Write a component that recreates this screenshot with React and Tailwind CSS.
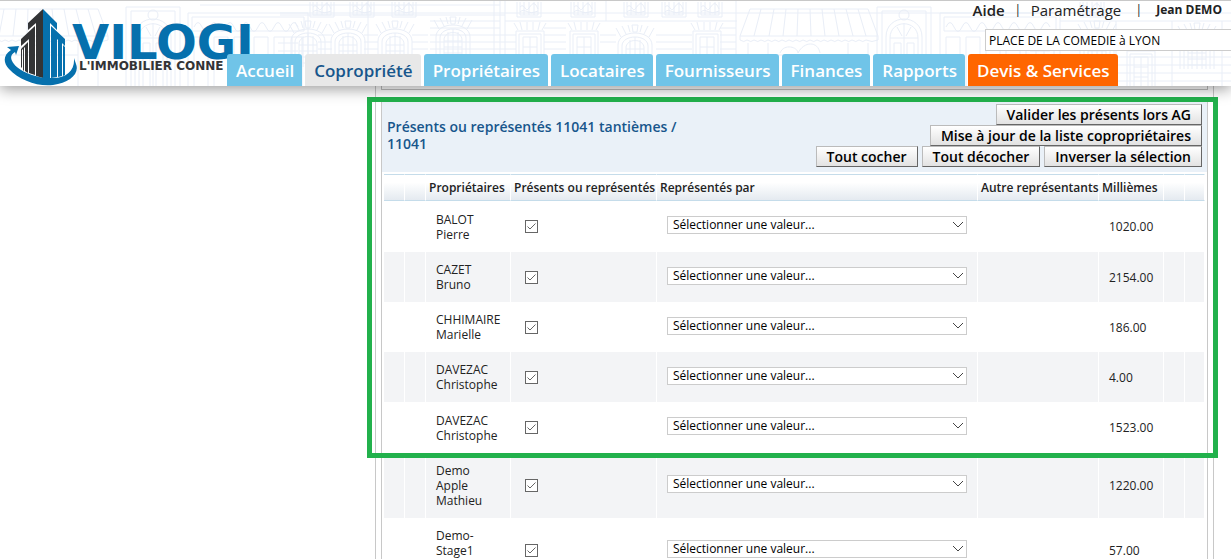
import React, { useState } from "react";

const tabs = [
  { label: "Accueil", color: "bg-[#70c4e8] text-white" },
  { label: "Copropriété", color: "bg-[#e8e8e8] text-[#17568c]" },
  { label: "Propriétaires", color: "bg-[#70c4e8] text-white" },
  { label: "Locataires", color: "bg-[#70c4e8] text-white" },
  { label: "Fournisseurs", color: "bg-[#70c4e8] text-white" },
  { label: "Finances", color: "bg-[#70c4e8] text-white" },
  { label: "Rapports", color: "bg-[#70c4e8] text-white" },
  { label: "Devis & Services", color: "bg-[#ff6600] text-white" },
];

const initialOwners = [
  { id: 1, name: ["BALOT", "Pierre"], shares: "1020.00", present: true },
  { id: 2, name: ["CAZET", "Bruno"], shares: "2154.00", present: true },
  { id: 3, name: ["CHHIMAIRE", "Marielle"], shares: "186.00", present: true },
  { id: 4, name: ["DAVEZAC", "Christophe"], shares: "4.00", present: true },
  { id: 5, name: ["DAVEZAC", "Christophe"], shares: "1523.00", present: true },
  { id: 6, name: ["Demo", "Apple", "Mathieu"], shares: "1220.00", present: true },
  { id: 7, name: ["Demo-", "Stage1", "Demo"], shares: "57.00", present: true },
];

const ArchWindow = ({ x, y }) => (
  <g transform={`translate(${x} ${y})`}>
    <path d="M-4 40V14C-4 -2 30 -2 30 14V40M0 40V15C0 3 26 3 26 15V40M4 40V17C4 7 22 7 22 17V40" />
    <path d="M8 9V40M13 6V40M18 9V40M4 18H22M4 24H22M4 30H22M4 36H22" />
    <path d="M-6 -3L-1 6M0 -5L4 3M6 -6L8 1M20 -6L18 1M26 -5L22 3M32 -3L27 6M10 -6H16L15 1H11Z" />
  </g>
);

const SquareWindow = ({ x, y }) => (
  <g transform={`translate(${x} ${y})`}>
    <path d="M-3 0H25V40M-3 0V40M0 3H22V40M0 3V40M4 6H18V40M4 6V40M11 6V40M4 16H18M4 26H18" />
    <path d="M-5 -8L-1 -1M1 -9L3 -1M8 -9V-1M14 -9V-1M21 -9L19 -1M27 -8L23 -1" />
  </g>
);

const Balcony = ({ x }) => (
  <g transform={`translate(${x} 1)`}>
    <path d="M0 0V15H24V0M3 0V13H21V0M7 0V13M12 0V13M17 0V13M3 5C8 0 8 12 12 6S18 0 21 7M3 10C8 5 10 14 21 9" />
  </g>
);

const Awning = ({ x }) => (
  <g transform={`translate(${x} 8)`}>
    <path d="M10 0H128L138 27H0ZM0 27V31Q4 34 7 31Q11 34 14 31Q18 34 21 31Q25 34 28 31Q32 34 35 31Q39 34 42 31Q46 34 49 31Q53 34 56 31Q60 34 63 31Q67 34 70 31Q74 34 77 31Q81 34 84 31Q88 34 91 31Q95 34 98 31Q102 34 105 31Q109 34 112 31Q116 34 119 31Q123 34 126 31Q132 34 138 31V27" />
    <path d="M21 0L14 27M34 0L29 27M46 0L43 27M58 0L57 27M70 0L71 27M82 0L85 27M94 0L99 27M106 0L113 27M118 0L126 27" />
    <path d="M8 34V78M28 34V78M108 34V78M128 34V78M28 46H108M40 44C44 34 58 38 58 44C64 32 78 32 80 44" />
  </g>
);

const Doorway = ({ x }) => (
  <g transform={`translate(${x} 6)`}>
    <path d="M0 80V0H54V80M5 80V4H49V80M9 80V30C9 6 45 6 45 30V80M13 80V31C13 12 41 12 41 31V80M27 16V80M13 31H41M17 80V36H24V80M30 80V36H37V80M20 20L25 29M34 20L29 29" />
    <circle cx="27" cy="8" r="5" />
  </g>
);

const Shopfront = ({ x }) => (
  <g transform={`translate(${x} 12)`}>
    <path d="M0 0H120V74H0ZM4 4H116V18H4ZM6 14Q10 5 14 14T22 14T30 14T38 14T46 14T54 14T62 14T70 14T78 14T86 14T94 14T102 14T110 14M6 74V24H20V74M26 74V24H40V74M46 74V24H60V74M66 74V24H80V74M86 74V24H114V74M90 30H110M90 38H110M90 46H110M96 24V60M104 24V60" />
  </g>
);

// pale street front drawn behind the header
const Facade = () => (
  <svg
    className="absolute inset-0 h-full w-full"
    fill="none"
    stroke="#e9eef7"
    strokeWidth="1"
    aria-hidden="true"
  >
    <Awning x={-30} />
    <Doorway x={126} />
    <Shopfront x={188} />
    <path d="M280 12H1231M280 14H505M505 20H737M200 4H500M430 20H500M430 27H500M430 34H500M430 41H500M430 48H500M318 34H332M318 41H332M318 48H332M364 34H378M364 41H378M364 48H378M412 34H428M412 41H428M412 48H428M494 0V86M500 0V86M505 0V86M368 0V86M606 0V20M736 0V86" />
    <path d="M500 34H516M500 41H516M500 48H516M544 27H566M544 34H566M544 41H566M544 48H566M600 34H616M600 41H616M656 34H692M656 41H692M656 48H692M720 27H736M720 34H736M720 41H736M720 48H736" />
    <ArchWindow x={295} y={26} />
    <ArchWindow x={335} y={26} />
    <ArchWindow x={382} y={26} />
    <ArchWindow x={440} y={22} />
    <ArchWindow x={622} y={30} />
    <Balcony x={350} />
    <Balcony x={310} />
    <Balcony x={392} />
    <Balcony x={517} />
    <Balcony x={571} />
    <Balcony x={624} />
    <Balcony x={662} />
    <Balcony x={698} />
    <SquareWindow x={519} y={30} />
    <SquareWindow x={573} y={30} />
    <SquareWindow x={696} y={30} />
    <Awning x={740} />
    <Doorway x={877} />
    <Shopfront x={940} />
    <Balcony x={1080} />
    <ArchWindow x={1084} y={26} />
    <SquareWindow x={1130} y={50} />
    <ArchWindow x={1184} y={28} />
    <path d="M1060 20H1231M1060 56H1231M1060 64H1231M1060 72H1231M1060 80H1231M1116 20V86M1172 20V86M1222 20V86" />
  </svg>
);

const Logo = () => (
  <a href="#" className="relative block h-full w-[227px] shrink-0" aria-label="Vilogi">
    <svg viewBox="0 0 270 85" className="h-[85px] w-[270px] max-w-none">
      <g fill="#333436">
        <path d="M43 8L28 22V29L36 22V75L43 77Z" />
        <path d="M35 25L21 38V45L29 38V72L35 74Z" />
        <path d="M28 41L21 48V66L22 67V49L23 48V69L24 70V47L25 46V70L28 72Z" />
      </g>
      <g fill="#0670ad">
        <path d="M43 8L57 22V29L50 22V77H43Z" />
        <path d="M51 25L65 38V45L62 42V75L58 76V39L57 38V76L51 77Z" />
        <path d="M63 44L65 46V74L63 75Z" />
        <path d="M19 45L7 46L11 49C3 54 3 62 9 68C19 79 38 86 53 84C69 82 80 73 76 63L74 57C75 69 67 77 53 77C38 78 20 71 14 63C10 58 10 54 15 51L16 54Z" />
      </g>
      <text x="72" y="58" fill="#0670ad" className="font-['DejaVu_Sans'] text-[48px] font-bold">
        VILOGI
      </text>
      <text x="79" y="69" fill="#333436" className="font-['DejaVu_Sans'] text-[12px] font-bold">
        L'IMMOBILIER CONNE
      </text>
    </svg>
  </a>
);

const Header = () => (
  <header className="relative z-10 flex h-[86px] shrink-0 border-t border-[#c8c8c8] bg-white shadow-[0_3px_14px_rgba(0,0,0,0.4)]">
    <Facade />
    <Logo />
    <div className="relative flex min-w-0 flex-1 flex-col">
      <div className="flex h-[18px] items-center justify-end pr-[9px] text-[15px] text-[#222]">
        <a href="#" className="font-semibold">Aide</a>
        <span className="w-[26px] text-center text-[12px]">|</span>
        <a href="#">Paramétrage</a>
        <span className="w-[35px] text-center text-[12px]">|</span>
        <a href="#" className="text-[12px] font-bold">Jean DEMO</a>
      </div>
      <input
        type="text"
        aria-label="Copropriété"
        defaultValue="PLACE DE LA COMEDIE à LYON"
        className="mt-[10px] h-[22px] w-[246px] self-end border border-r-0 border-[#ccc] bg-white px-[3px] text-[12px] text-black"
      />
      <nav className="mt-auto flex gap-[3px]">
        {tabs.map((tab) => (
          <a
            key={tab.label}
            href="#"
            className={`h-8 rounded-t-[3px] pr-2 pl-[9px] text-[17px] leading-[34px] font-semibold whitespace-nowrap ${tab.color}`}
          >
            {tab.label}
          </a>
        ))}
      </nav>
    </div>
  </header>
);

const ActionButton = ({ children, onClick }) => (
  <button
    type="button"
    onClick={onClick}
    className="h-[21px] border border-t-[#bbb] border-r-[#666] border-b-[#666] border-l-[#bbb] bg-linear-to-b from-white to-[#e2e2e2] px-[10px] text-[14px] leading-[18px] font-semibold whitespace-nowrap text-black"
  >
    {children}
  </button>
);

const RepresentativeSelect = ({ owner }) => (
  <div className="relative">
    <select
      aria-label={`Représentant de ${owner.name.join(" ")}`}
      className="block h-[18px] w-full appearance-none rounded-none border border-[#ccc] bg-white pl-[5px] text-[12px] leading-4 text-black"
    >
      <option>Sélectionner une valeur...</option>
    </select>
    <svg
      className="pointer-events-none absolute top-[5px] right-[3px] h-[7px] w-3"
      viewBox="0 0 12 7"
      fill="none"
      stroke="#444"
      aria-hidden="true"
    >
      <path d="M1 1L6 6L11 1" />
    </svg>
  </div>
);

const columns = [
  { label: "", width: "w-[21px]" },
  { label: "", width: "w-[21px]" },
  { label: "Propriétaires", width: "w-[85px]" },
  { label: "Présents ou représentés", width: "w-[146px]" },
  { label: "Représentés par", width: "" },
  { label: "Autre représentants", width: "w-[121px]" },
  { label: "Millièmes", width: "w-[65px]" },
  { label: "", width: "w-[21px]" },
  { label: "", width: "w-5" },
];

const OwnersTable = ({ owners, onToggle }) => (
  <table className="w-full table-fixed border-separate border-spacing-0 text-[12px] leading-[15px] text-[#222]">
    <thead>
      <tr className="h-[27px]">
        {columns.map((col, i) => (
          <th
            key={i}
            scope="col"
            className={`border-y border-r border-y-[#c5dcea] border-r-white bg-linear-to-b from-white from-30% to-[#e4eaf0] p-0 pl-[3px] text-left font-semibold whitespace-nowrap ${col.width}`}
          >
            {col.label}
          </th>
        ))}
      </tr>
    </thead>
    <tbody>
      {owners.map((owner) => (
        <tr
          key={owner.id}
          className="h-[50px] even:bg-[#f3f4f6] [&:nth-child(4n+1)]:h-[51px] [&>td]:border-r [&>td]:border-white"
        >
          <td />
          <td />
          <td className="py-[10px] pl-[10px]">
            {owner.name.map((part, i) => (
              <div key={i}>{part}</div>
            ))}
          </td>
          <td className="pl-[14px]">
            <span className="relative block h-[13px] w-[13px]">
              <input
                type="checkbox"
                aria-label={`${owner.name.join(" ")} présent ou représenté`}
                checked={owner.present}
                onChange={() => onToggle(owner.id)}
                className="block h-[13px] w-[13px] appearance-none border border-[#666] bg-white"
              />
              {owner.present && (
                <svg
                  className="pointer-events-none absolute inset-0 h-[13px] w-[13px]"
                  viewBox="0 0 13 13"
                  fill="none"
                  stroke="#666"
                  aria-hidden="true"
                >
                  <path d="M2.500 6.500L5 9L10.500 3.500" />
                </svg>
              )}
            </span>
          </td>
          <td className="px-[10px] pb-[3px]">
            <RepresentativeSelect owner={owner} />
          </td>
          <td />
          <td className="pl-[10px]">{owner.shares}</td>
          <td />
          <td />
        </tr>
      ))}
    </tbody>
  </table>
);

const App = () => {
  const [owners, setOwners] = useState(initialOwners);

  const handleToggle = (id) => {
    setOwners(owners.map((o) => (o.id === id ? { ...o, present: !o.present } : o)));
  };

  const setAll = (present) => setOwners(owners.map((o) => ({ ...o, present })));

  const handleInvert = () => {
    setOwners(owners.map((o) => ({ ...o, present: !o.present })));
  };

  return (
    <div className="flex h-screen flex-col overflow-hidden bg-white font-['Open_Sans',sans-serif]">
      <Header />

      <main className="mr-[17px] ml-[375px] min-h-0 flex-1 border-x border-[#c8c8c8] px-[5px]">
        {/* End of the previous block */}
        <div className="h-1 border-x border-b border-[#c0c0c0]" />

        {/* Attendance */}
        <section className="relative mt-[7px] border-x border-[#c8c8c8]">
          <div className="flex items-center justify-between bg-[#eaf1f8] pt-[7px] pr-[5px] pb-[5px] pl-[5px]">
            <h2 className="w-[310px] pb-[2px] text-[14px] leading-[17px] font-semibold text-[#17568c]">
              Présents ou représentés 11041 tantièmes / 11041
            </h2>
            <div className="flex flex-col items-end">
              <ActionButton>Valider les présents lors AG</ActionButton>
              <ActionButton>Mise à jour de la liste copropriétaires</ActionButton>
              <div className="flex gap-1">
                <ActionButton onClick={() => setAll(true)}>Tout cocher</ActionButton>
                <ActionButton onClick={() => setAll(false)}>Tout décocher</ActionButton>
                <ActionButton onClick={handleInvert}>Inverser la sélection</ActionButton>
              </div>
            </div>
          </div>

          <div className="px-[2px] pt-[2px]">
            <OwnersTable owners={owners} onToggle={handleToggle} />
          </div>

          {/* Highlight frame */}
          <div className="pointer-events-none absolute top-0 -right-[11px] -left-[15px] h-[361px] border-[5px] border-[#22b14c]" />
        </section>
      </main>
    </div>
  );
};

export default App;
